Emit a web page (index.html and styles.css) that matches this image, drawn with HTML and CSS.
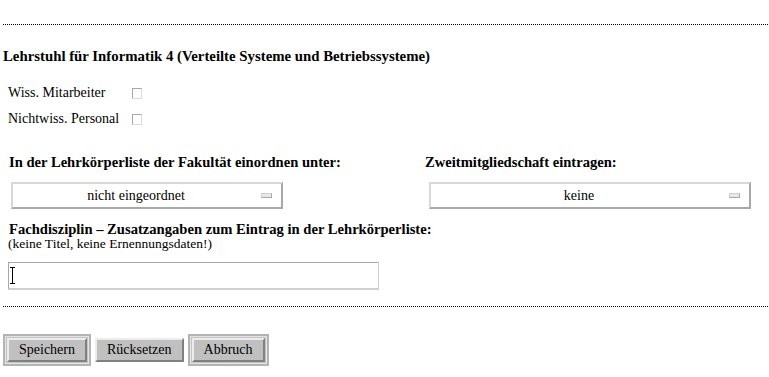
FILE: index.html
```html
<!DOCTYPE html>
<html>
<head>
<meta charset="utf-8" />
<title>Lehrstuhl</title>
<link rel="stylesheet" href="styles.css">
</head>
<body>
<div class="rule top"></div>

<div class="chair">Lehrstuhl für Informatik 4 (Verteilte Systeme und Betriebssysteme)</div>

<div class="checks">
	<div class="check-row"><span class="check-label">Wiss. Mitarbeiter</span><span class="checkbox"></span></div>
	<div class="check-row"><span class="check-label">Nichtwiss. Personal</span><span class="checkbox"></span></div>
</div>

<div class="choices">
	<div class="choice first">
		<div class="label">In der Lehrkörperliste der Fakultät einordnen unter:</div>
		<div class="select wide1"><span class="select-text">nicht eingeordnet</span><span class="select-mark"></span></div>
	</div>
	<div class="choice second">
		<div class="label">Zweitmitgliedschaft eintragen:</div>
		<div class="select wide2"><span class="select-text">keine</span><span class="select-mark"></span></div>
	</div>
</div>

<div class="label subject">Fachdisziplin &ndash; Zusatzangaben zum Eintrag in der Lehrkörperliste:</div>
<div class="hint">(keine Titel, keine Ernennungsdaten!)</div>
<div class="textfield"><span class="caret"></span></div>

<div class="rule bottom"></div>

<div class="buttons">
	<div class="frame"><div class="button">Speichern</div></div>
	<div class="button plain">Rücksetzen</div>
	<div class="frame"><div class="button">Abbruch</div></div>
</div>
</body>
</html>
```

FILE: styles.css
```css
body {
	margin: 0;
	font-family: "Liberation Serif", "Times New Roman", serif;
	font-size: 14px;
	line-height: 16px;
	color: #000;
	background: #fff;
}

.rule {
	border-top: 1px dotted #000;
	margin-left: 3px;
	margin-right: 1px;
}

.rule.top { margin-top: 24px; }
.rule.bottom { margin-top: 16px; }

.chair {
	font-weight: bold;
	font-size: 14.8px;
	margin: 23px 0 0 3px;
}

.checks {
	margin: 16px 0 0 8px;
}

.check-row {
	display: flex;
	align-items: center;
	height: 26px;
}

.check-label {
	width: 124px;
}

.checkbox {
	width: 8px;
	height: 9px;
	border: 1px solid #dcdcdc;
	border-top-color: #a8a8a8;
	border-left-color: #a8a8a8;
}

.choices {
	display: flex;
	margin-top: 22px;
}

.label {
	font-weight: bold;
	font-size: 14.6px;
}

.choice.first { padding-left: 9px; width: 416px; }

.select {
	display: flex;
	align-items: center;
	height: 23px;
	margin-top: 12px;
	border: 2px solid #a8a8a8;
	border-top-color: #d8d8d8;
	border-left-color: #d8d8d8;
	background: #fff;
}

.first .select { margin-left: 2px; }
.second .select { margin-left: 4px; }

.wide1 { width: 268px; }
.wide2 { width: 318px; }

.select-text {
	flex: 1;
	text-align: center;
	padding-right: 2px;
}

.select-mark {
	width: 9px;
	height: 3px;
	margin-right: 9px;
	border: 1px solid #a8a8a8;
	border-top-color: #d0d0d0;
	border-left-color: #d0d0d0;
	background: #e8e8e8;
}

.subject {
	margin: 12px 0 0 9px;
}

.hint {
	margin-left: 8px;
	font-size: 13.5px;
	line-height: 14px;
}

.textfield {
	margin: 11px 0 0 8px;
	width: 369px;
	height: 25px;
	border: 1px solid #a8a8a8;
	border-right-color: #d0d0d0;
	border-bottom: 2px solid #d0d0d0;
	display: flex;
	align-items: center;
}

/* text cursor drawn as a thin I-beam */
.caret {
	position: relative;
	width: 1px;
	height: 17px;
	margin-left: 3px;
	background: #000;
}

.caret::before,
.caret::after {
	content: "";
	position: absolute;
	left: -2px;
	width: 5px;
	height: 1px;
	background: #000;
}

.caret::before { top: 0; }
.caret::after { bottom: 0; }

.buttons {
	display: flex;
	align-items: center;
	gap: 4px;
	margin: 27px 0 0 3px;
}

.frame {
	padding: 2px;
	border: 2px solid #b4b4b4;
	box-shadow: inset 0 0 0 1px #e4e4e4;
	background: #c4c4c4;
}

.button {
	background: #c0c0c0;
	border: 2px solid #808080;
	border-top-color: #ececec;
	border-left-color: #ececec;
	padding: 2px 10px;
	line-height: 16px;
}
```
